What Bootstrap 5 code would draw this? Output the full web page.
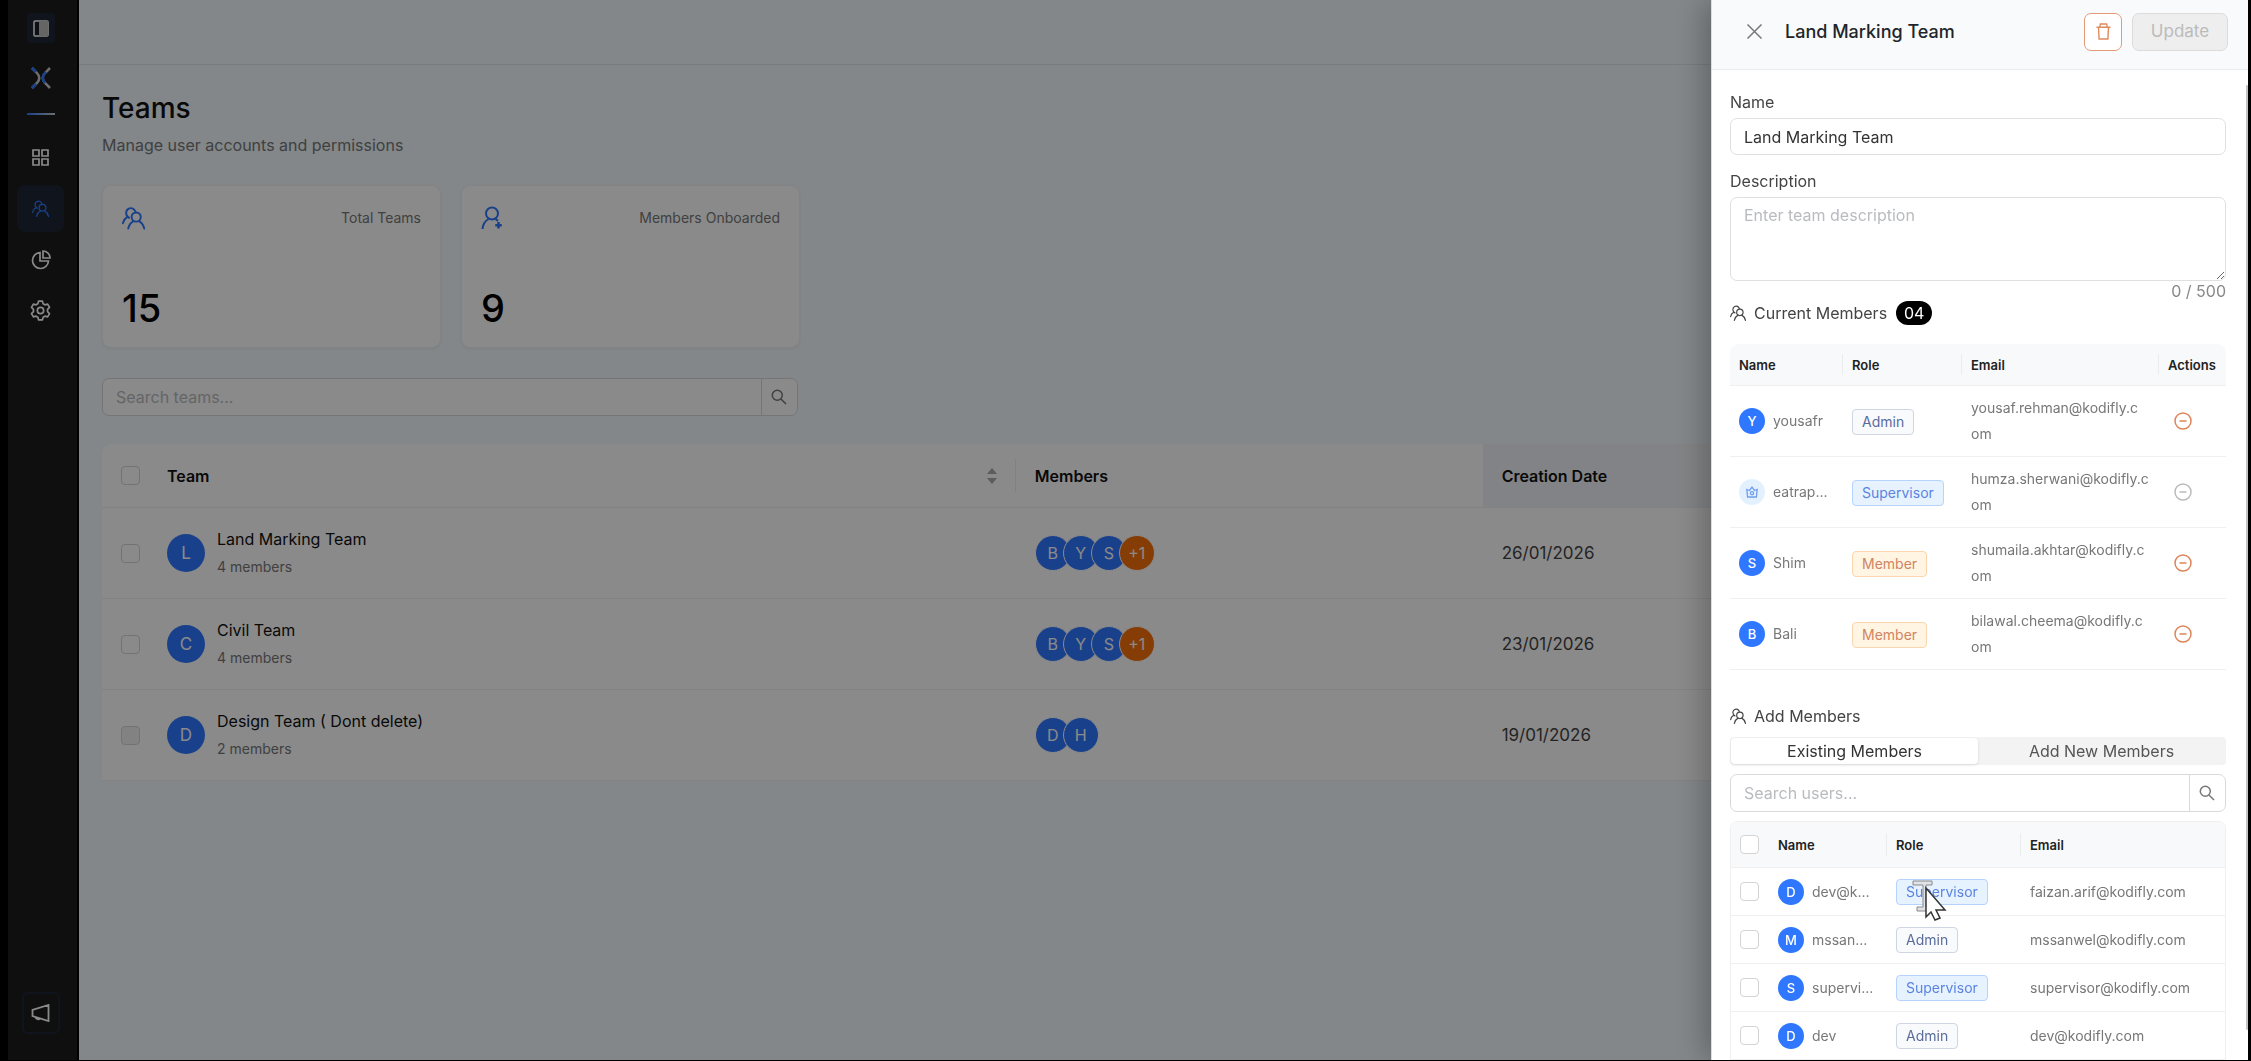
<!DOCTYPE html>
<html lang="en">
<head>
<meta charset="utf-8">
<meta name="viewport" content="width=device-width, initial-scale=1">
<title>Teams</title>
<link href="https://cdn.jsdelivr.net/npm/bootstrap@5.3.0/dist/css/bootstrap.min.css" rel="stylesheet">
<style>
body{font-family:Inter,"Open Sans",sans-serif;font-size:16px;line-height:24px;color:#111;background:#000;height:100vh;overflow:hidden;padding:0 3px 1px 8px}
svg{display:block;fill:none;stroke:currentColor;flex:none}
.side-rail{width:71px;background:#1c1c1c;color:#fff;padding:13px 4px 26px 0;border-right:2px solid #000}
.rail-btn{background:none;border:0;color:inherit;padding:0;display:flex;align-items:center;justify-content:center;border-radius:8px;width:47px;height:47px}
.rail-toggle{width:28px;height:30px;background:#1f2637;border-radius:4px}
.rail-line{width:28px;height:2px;background:linear-gradient(90deg,#2f77ff,#ccc);margin:24px 0 19px}
.rail-btn.current{background:#1f2637;color:#2f77ff}
.rail-news{width:38px;height:42px;border:2px solid #1f2637;border-radius:6px}
.page-area{background:#f2f9fd}
.top-bar{height:65px;border-bottom:1px solid #e4e4e6}
.page-body{padding:24px 24px 24px 23px}
.page-title{font-size:28px;line-height:38px;font-weight:500;margin:0}
.page-sub{font-size:16px;line-height:26px;color:#777;margin:5px 0 27px}
.stat-row{gap:20px}
.stat-box{width:339px;height:163px;background:#fff;border:1px solid #f2f2f2;border-radius:9px;padding:20px 19px 16px;box-shadow:0 1px 3px rgba(0,0,0,.06)}
.stat-box svg{color:#2f77ff}
.stat-label{font-size:14px;color:#777}
.stat-value{font-size:38px;line-height:46px;font-weight:500;color:#000}
.search-box{height:38px}
.search-box .form-control,.search-box .btn{border-color:#d9d9d9;background:#fff;font-size:16px;border-radius:7px}
.search-box .btn{width:37px;padding:0 0 0 9px;color:#777}
.form-control::placeholder{color:#b9bbbf;opacity:1}
.form-control{color:#333;padding-left:13px}
.page-search{width:696px;margin:30px 0 28px}
.tick{width:19px;height:19px;margin:0;display:block;border:1px solid #d4d4d4;background-color:#fff;border-radius:4px}
.form-check-input.tick{border-radius:4px}
.form-check-input.tick:disabled{opacity:1;background-color:#f0f0f0}
.data-grid{table-layout:fixed;width:100%;margin:0;background:#fff;border-collapse:separate;border-spacing:0}
.data-grid td,.data-grid th{border-bottom:1px solid #f0f0f0;vertical-align:middle;position:relative}
.data-grid th{font-weight:600}
.has-rule::after{content:"";position:absolute;right:0;top:24%;height:52%;width:1px;background:#ececf0}
.team-grid{border-radius:9px 9px 0 0;overflow:hidden}
.team-grid th{height:64px;padding:0 19px}
.team-grid td{height:91px;padding:0 19px}
.team-grid .sorted{background:#f0f3f7}
.col-tick{width:65px}.col-team{width:40%}.col-part{width:22%}
.face{border-radius:50%;background:#2f77ff;color:#fff;display:flex;align-items:center;justify-content:center;flex:none}
.face-lg{width:38px;height:38px;font-size:17px}
.face-md{width:36px;height:36px;border:1px solid #fff;font-size:16px;margin-right:-8px}
.face-sm{width:26px;height:26px;font-size:13px;font-weight:500}
.face-more{background:#f5710b}
.face-pale{background:#e3f1ff;color:#6f9df0}
.team-name{line-height:24px}
.team-sub{font-size:14px;line-height:24px;color:#777;margin-top:4px}
.date-text{color:#444;font-size:17px}
.page-shade{position:fixed;inset:0;z-index:1040;background:rgba(0,0,0,.46)}
.drawer.offcanvas{--bs-offcanvas-width:537px;right:3px;bottom:1px;border:0;border-left:1px solid #ddd;box-shadow:-6px 0 30px rgba(0,0,0,.28);background:#fff;height:auto}
.drawer-head{height:70px;background:#f8fafc;border-bottom:1px solid #e8edf2;padding:0 20px 6px 31px}
.drawer-close{background:none;border:0;padding:0;color:#777}
.drawer-title{font-size:18px;line-height:28px;font-weight:500;margin:0 0 0 23px}
.head-actions{gap:10px}
.btn-trash{width:38px;height:38px;border:1px solid #e39b76;color:#e08a60;background:#fff;border-radius:7px;padding:0;display:flex;align-items:center;justify-content:center}
.btn-update,.btn-update:disabled{width:96px;height:38px;border:1px solid #dcdcdc;background:#eee;color:#bbb;border-radius:7px;padding:0;font-size:17px;opacity:1}
.drawer-body{padding:20px 22px 0 18px;overflow:hidden}
.field-label{line-height:24px;margin:0 0 4px;display:block;color:#444}
.field-label.next{margin-top:14px}
.text-field{height:37px;border-color:#e0e0e0;border-radius:7px;padding-top:0;padding-bottom:0}
.text-area{height:84px;border-color:#e0e0e0;border-radius:7px;padding-top:5px}
.count-text{line-height:20px;color:#888;text-align:right}
.section-head{line-height:24px;color:#444}
.section-head.add{margin-top:34px}
.count-pill{background:#000;color:#fff;border-radius:12px;width:36px;height:24px;text-align:center;margin-left:9px}
.member-grid th{background:#f8f9fb;font-size:13px;padding:0 9px;color:#222}
.member-grid td{padding:0 9px;font-size:14px;color:#777}
.current-grid{border-radius:9px 9px 0 0;overflow:hidden;margin-top:19px}
.current-grid th{height:42px}
.current-grid td{height:71px;line-height:26px}
.w-n1{width:113px}.w-r1{width:119px}.w-a1{width:67px}
.w-t2{width:38px}.w-n2{width:118px}.w-r2{width:134px}
.add-grid{border:1px solid #f0f0f0;border-radius:7px 7px 0 0;overflow:hidden;margin-top:9px}
.add-grid th{height:46px}
.add-grid td{height:48px}
.role-tag{display:inline-block;height:26px;line-height:24px;border:1px solid;border-radius:4px;padding:0 9px;font-size:14px;vertical-align:middle}
.role-admin{background:#f8fafc;border-color:#cfd6e3;color:#5a6c9c}
.role-supervisor{background:#e6f3ff;border-color:#b5d3fb;color:#5b83e0}
.role-member{background:#fff5e2;border-color:#fad5ad;color:#d08463}
.act-btn{background:none;border:0;padding:0 0 0 6px;color:#de8459;display:block}
.act-btn:disabled{color:#bbb}
.seg-bar{background:#f3f3f3;border-radius:4px;height:28px;padding:1px;margin-top:9px}
.seg-item{flex:1;border:0;background:none;border-radius:4px;padding:0;font-size:16px;line-height:26px;color:#555}
.seg-item.on{background:#fff;color:#333;box-shadow:0 1px 3px rgba(0,0,0,.12)}
.user-search{margin-top:9px}
.scroll-mark{position:absolute;right:0;top:85px;height:945px;width:2px;background:#c4c4c4;border-radius:2px}
.pointer{position:absolute;left:25px;top:10px;stroke:none}
</style>
<script src="https://cdn.jsdelivr.net/npm/bootstrap@5.3.0/dist/js/bootstrap.bundle.min.js"></script>
</head>
<body class="d-flex">
<svg width="0" height="0" class="position-absolute" aria-hidden="true">
 <symbol id="team" viewBox="0 0 24 24"><g stroke-linecap="round"><circle cx="14.800" cy="11" r="4.800"/><path d="M6.500 23c.8-3.800 2.600-6.200 5.500-7.800M23.200 23c-.8-3.800-2.600-6.200-5.500-7.800M.9 17.500c.6-2.900 1.900-4.900 4.100-6.200M7.400 11.800C3.200 9.600 3.500 4 7 2.200c3-1.400 6 .2 7 3"/></g></symbol>
 <symbol id="lens" viewBox="0 0 16 16"><circle cx="6.300" cy="6.300" r="5"/><path d="M10 10l5 5"/></symbol>
 <symbol id="minus" viewBox="0 0 18 18"><circle cx="9" cy="9" r="8"/><path d="M5.500 9h7"/></symbol>
</svg>

<nav class="side-rail d-flex flex-column align-items-center flex-shrink-0" aria-label="Main">
 <button class="rail-btn rail-toggle" aria-label="Toggle menu"><svg width="16" height="17" viewBox="0 0 16 17"><rect x="1" y="1" width="14" height="15" rx="1" stroke-width="1.500"/><path d="M6 1h9v15H6z" fill="#bbb" stroke="none"/><path d="M4 2v13" stroke="#1c1c1c" stroke-width="3"/></svg></button>
 <a href="#" class="mt-4" aria-label="Home"><svg width="22" height="22" viewBox="0 0 22 22" stroke-width="2.500"><path d="M2 1l5 5q4.500 5 0 10l-5 5M20 1l-5 5q-4.500 5 0 10l5 5" stroke="#ccc"/><path d="M2 1l4 4M2 21l4-4M16 5l-1 1q-4.500 5 0 10" stroke="#2f77ff"/></svg></a>
 <div class="rail-line"></div>
 <button class="rail-btn" aria-label="Dashboard"><svg width="17" height="17" viewBox="0 0 17 17" stroke-width="1.700"><path d="M1 1h6v6H1zM10 1h6v6h-6zM1 10h6v6H1zM10 10h6v6h-6z"/></svg></button>
 <button class="rail-btn current mt-1" aria-label="Teams"><svg width="17" height="17" stroke-width="1.800"><use href="#team"/></svg></button>
 <button class="rail-btn mt-1" aria-label="Reports"><svg width="20" height="20" viewBox="0 0 20 20" stroke-width="1.700"><path d="M9 2.500a8 8 0 1 0 8.500 8.500H9z"/><path d="M12 1v7h7a7 7 0 0 0-7-7z"/></svg></button>
 <button class="rail-btn mt-1" aria-label="Settings"><svg width="21" height="21" viewBox="0 0 20 20" stroke-width="1.600" stroke-linejoin="round"><path d="M8.200 1h3.600l.7 2.600 1.700 1 2.600-.7 1.800 3.100-1.900 1.900v2.200l1.900 1.900-1.800 3.100-2.600-.7-1.700 1-.7 2.600H8.200l-.7-2.600-1.700-1-2.600.7L1.400 13l1.900-1.900V8.900L1.400 7l1.800-3.100 2.600.7 1.700-1z"/><circle cx="10" cy="10" r="3"/></svg></button>
 <button class="rail-btn rail-news mt-auto" aria-label="Announcements"><svg width="19" height="18" viewBox="0 0 19 18" stroke-width="1.800"><path d="M17.500 1v16L1.500 12V6zM4.500 12.500c0 3 4 3.500 5 1.500"/></svg></button>
</nav>

<main class="page-area flex-grow-1">
 <header class="top-bar"></header>
 <div class="page-body">
  <h1 class="page-title">Teams</h1>
  <p class="page-sub">Manage user accounts and permissions</p>
  <div class="d-flex stat-row">
   <section class="stat-box d-flex flex-column justify-content-between">
    <div class="d-flex justify-content-between align-items-center"><svg width="23" height="24" stroke-width="2"><use href="#team"/></svg><span class="stat-label">Total Teams</span></div>
    <div class="stat-value">15</div>
   </section>
   <section class="stat-box d-flex flex-column justify-content-between">
    <div class="d-flex justify-content-between align-items-center"><svg width="22" height="24" viewBox="0 0 22 24" stroke-width="2"><circle cx="11" cy="7.500" r="6"/><path d="M1.500 23c.5-5 2.500-8 6-10M14.500 13c1 .5 1.800 1.200 2.500 2"/><path d="M17.500 16v6.500M14.250 19.250h6.500" stroke-width="2.500"/></svg><span class="stat-label">Members Onboarded</span></div>
    <div class="stat-value">9</div>
   </section>
  </div>
  <div class="input-group search-box page-search">
   <input class="form-control" type="search" placeholder="Search teams..." aria-label="Search teams">
   <button class="btn" aria-label="Search"><svg width="16" height="16" stroke-width="1.500"><use href="#lens"/></svg></button>
  </div>
  <table class="data-grid team-grid">
   <colgroup><col class="col-tick"><col class="col-team"><col class="col-part"><col class="col-part"><col></colgroup>
   <thead><tr>
    <th><input class="form-check-input tick" type="checkbox" aria-label="Select all teams"></th>
    <th class="has-rule ps-0"><div class="d-flex justify-content-between align-items-center">Team<svg width="10" height="16" viewBox="0 0 10 16"><path d="M5 0l5 6H0zM5 16l5-6H0z" fill="#aaa" stroke="none"/></svg></div></th>
    <th>Members</th><th class="sorted has-rule">Creation Date</th><th class="sorted"></th>
   </tr></thead>
   <tbody>
    <tr><td><input class="form-check-input tick" type="checkbox" aria-label="Select Land Marking Team"></td>
     <td class="ps-0"><div class="d-flex align-items-center"><span class="face face-lg">L</span><div class="ms-2 ps-1"><div class="team-name">Land Marking Team</div><div class="team-sub">4 members</div></div></div></td>
     <td><div class="d-flex"><span class="face face-md">B</span><span class="face face-md">Y</span><span class="face face-md">S</span><span class="face face-md face-more">+1</span></div></td>
     <td class="date-text">26/01/2026</td><td></td></tr>
    <tr><td><input class="form-check-input tick" type="checkbox" aria-label="Select Civil Team"></td>
     <td class="ps-0"><div class="d-flex align-items-center"><span class="face face-lg">C</span><div class="ms-2 ps-1"><div class="team-name">Civil Team</div><div class="team-sub">4 members</div></div></div></td>
     <td><div class="d-flex"><span class="face face-md">B</span><span class="face face-md">Y</span><span class="face face-md">S</span><span class="face face-md face-more">+1</span></div></td>
     <td class="date-text">23/01/2026</td><td></td></tr>
    <tr><td><input class="form-check-input tick" type="checkbox" disabled aria-label="Select Design Team"></td>
     <td class="ps-0"><div class="d-flex align-items-center"><span class="face face-lg">D</span><div class="ms-2 ps-1"><div class="team-name">Design Team ( Dont delete)</div><div class="team-sub">2 members</div></div></div></td>
     <td><div class="d-flex"><span class="face face-md">D</span><span class="face face-md">H</span></div></td>
     <td class="date-text">19/01/2026</td><td></td></tr>
   </tbody>
  </table>
 </div>
</main>

<div class="page-shade"></div>

<aside class="offcanvas offcanvas-end show drawer" data-bs-backdrop="false" data-bs-scroll="true" tabindex="-1" aria-labelledby="drawerTitle">
 <header class="drawer-head d-flex align-items-center flex-shrink-0">
  <button class="drawer-close ms-1" aria-label="Close"><svg width="15" height="15" viewBox="0 0 15 15" stroke-width="1.500"><path d="M.5.5l14 14M14.500.5l-14 14"/></svg></button>
  <h2 class="drawer-title" id="drawerTitle">Land Marking Team</h2>
  <div class="head-actions d-flex ms-auto">
   <button class="btn-trash" aria-label="Delete team"><svg width="15" height="17" viewBox="0 0 15 17" stroke-width="1.400"><path d="M.5 4.200h14M3.800 4l.5-3h6.400l.5 3M2.500 4.500l.6 11.500h8.800l.6-11.500"/></svg></button>
   <button class="btn btn-update" disabled>Update</button>
  </div>
 </header>
 <div class="drawer-body flex-grow-1">
  <label class="field-label" for="teamName">Name</label>
  <input id="teamName" class="form-control text-field" type="text" value="Land Marking Team">
  <label class="field-label next" for="teamDesc">Description</label>
  <textarea id="teamDesc" class="form-control text-area" placeholder="Enter team description"></textarea>
  <div class="count-text">0 / 500</div>
  <div class="section-head d-flex align-items-center"><svg width="16" height="16" class="me-2" stroke-width="1.800"><use href="#team"/></svg>Current Members<span class="count-pill">04</span></div>
  <table class="data-grid member-grid current-grid">
   <colgroup><col class="w-n1"><col class="w-r1"><col><col class="w-a1"></colgroup>
   <thead><tr><th class="has-rule">Name</th><th class="has-rule">Role</th><th class="has-rule">Email</th><th>Actions</th></tr></thead>
   <tbody>
    <tr><td><div class="d-flex align-items-center"><span class="face face-sm me-2">Y</span><span class="text-truncate">yousafr</span></div></td><td><span class="role-tag role-admin">Admin</span></td><td>yousaf.rehman@kodifly.c<br>om</td><td><button class="act-btn" aria-label="Remove yousafr"><svg width="18" height="18" stroke-width="1.500"><use href="#minus"/></svg></button></td></tr>
    <tr><td><div class="d-flex align-items-center"><span class="face face-sm face-pale me-2"><svg width="12" height="12" viewBox="0 0 12 12" stroke-width="1.300"><path d="M.8 3.500L3.500 4.500 6 1.200l2.500 3.300 2.700-1-.8 7.500H1.600z"/><circle cx="6" cy="7.200" r="1.600"/></svg></span><span class="text-truncate">eatrap...</span></div></td><td><span class="role-tag role-supervisor">Supervisor</span></td><td>humza.sherwani@kodifly.c<br>om</td><td><button class="act-btn" disabled aria-label="Remove eatrap"><svg width="18" height="18" stroke-width="1.500"><use href="#minus"/></svg></button></td></tr>
    <tr><td><div class="d-flex align-items-center"><span class="face face-sm me-2">S</span><span class="text-truncate">Shim</span></div></td><td><span class="role-tag role-member">Member</span></td><td>shumaila.akhtar@kodifly.c<br>om</td><td><button class="act-btn" aria-label="Remove Shim"><svg width="18" height="18" stroke-width="1.500"><use href="#minus"/></svg></button></td></tr>
    <tr><td><div class="d-flex align-items-center"><span class="face face-sm me-2">B</span><span class="text-truncate">Bali</span></div></td><td><span class="role-tag role-member">Member</span></td><td>bilawal.cheema@kodifly.c<br>om</td><td><button class="act-btn" aria-label="Remove Bali"><svg width="18" height="18" stroke-width="1.500"><use href="#minus"/></svg></button></td></tr>
   </tbody>
  </table>
  <div class="section-head add d-flex align-items-center"><svg width="16" height="16" class="me-2" stroke-width="1.800"><use href="#team"/></svg>Add Members</div>
  <div class="seg-bar d-flex"><button class="seg-item on">Existing Members</button><button class="seg-item">Add New Members</button></div>
  <div class="input-group search-box user-search">
   <input class="form-control" type="search" placeholder="Search users..." aria-label="Search users">
   <button class="btn" aria-label="Search"><svg width="16" height="16" stroke-width="1.500"><use href="#lens"/></svg></button>
  </div>
  <table class="data-grid member-grid add-grid">
   <colgroup><col class="w-t2"><col class="w-n2"><col class="w-r2"><col></colgroup>
   <thead><tr><th><input class="form-check-input tick" type="checkbox" aria-label="Select all users"></th><th class="has-rule">Name</th><th class="has-rule">Role</th><th>Email</th></tr></thead>
   <tbody>
    <tr><td><input class="form-check-input tick" type="checkbox" aria-label="Select dev@k"></td><td><div class="d-flex align-items-center"><span class="face face-sm me-2">D</span><span>dev@k...</span></div></td><td><span class="role-tag role-supervisor">Supervisor</span>
     <svg class="pointer" width="36" height="44" viewBox="0 0 36 44"><path d="M1 3h19v4h-6v22h6v4H5v-4h6V7H1z" fill="#dfe3e8" stroke="#888" stroke-width="1"/><path d="M14 10v29l5-5 4 8 5-2-4-8h9z" fill="#fff" stroke="#333" stroke-width="1.500"/></svg></td><td>faizan.arif@kodifly.com</td></tr>
    <tr><td><input class="form-check-input tick" type="checkbox" aria-label="Select mssan"></td><td><div class="d-flex align-items-center"><span class="face face-sm me-2">M</span><span>mssan...</span></div></td><td><span class="role-tag role-admin">Admin</span></td><td>mssanwel@kodifly.com</td></tr>
    <tr><td><input class="form-check-input tick" type="checkbox" aria-label="Select supervi"></td><td><div class="d-flex align-items-center"><span class="face face-sm me-2">S</span><span>supervi...</span></div></td><td><span class="role-tag role-supervisor">Supervisor</span></td><td>supervisor@kodifly.com</td></tr>
    <tr><td><input class="form-check-input tick" type="checkbox" aria-label="Select dev"></td><td><div class="d-flex align-items-center"><span class="face face-sm me-2">D</span><span>dev</span></div></td><td><span class="role-tag role-admin">Admin</span></td><td>dev@kodifly.com</td></tr>
   </tbody>
  </table>
 </div>
 <div class="scroll-mark"></div>
</aside>
</body>
</html>
